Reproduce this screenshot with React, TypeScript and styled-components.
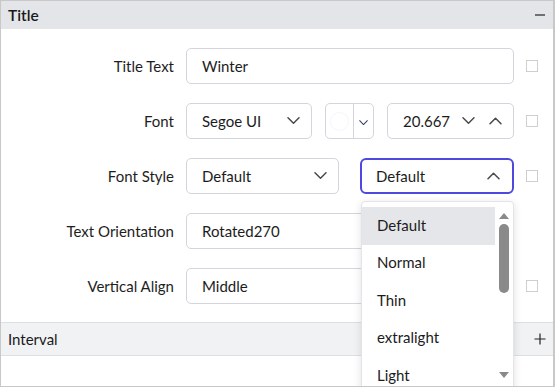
import React from "react";
import styled, { createGlobalStyle } from "styled-components";

const GlobalStyle = createGlobalStyle`
  html, body { margin: 0; padding: 0; background: #ffffff; }
  body { font-family: Lato, "Open Sans", sans-serif; color: #1c1c1c; }
  * { box-sizing: border-box; }
  svg { display: block; }
`;

const Panel = styled.div`
  position: relative;
  width: 555px;
  height: 387px;
  border: 1px solid #c8c8c8;
  border-right-width: 2px;
  overflow: hidden;
  background: #ffffff;
  display: flex;
  flex-direction: column;
`;

const SectionHeader = styled.div<{ $collapsed?: boolean }>`
  display: flex;
  align-items: center;
  justify-content: space-between;
  height: ${(p) => (p.$collapsed ? "34px" : "28px")};
  padding: 0 7px 0 7px;
  background: ${(p) => (p.$collapsed ? "#f1f2f4" : "#e4e5e8")};
  border-top: ${(p) => (p.$collapsed ? "1px solid #dedfe2" : "none")};
  border-bottom: ${(p) => (p.$collapsed ? "1px solid #dedfe2" : "none")};
  font-size: ${(p) => (p.$collapsed ? "15px" : "15.5px")};
  font-weight: ${(p) => (p.$collapsed ? 400 : 600)};
  color: #1a1a1a;
  flex-shrink: 0;
`;

const Body = styled.div`
  display: flex;
  flex-direction: column;
  gap: 19px;
  padding: 19px 0 18px 1px;
`;

const Row = styled.div`
  display: grid;
  grid-template-columns: 172px 328px 11px;
  column-gap: 12px;
  align-items: center;
  height: 36px;
`;

const Label = styled.div`
  text-align: right;
  font-size: 15px;
  color: #1e1e1e;
`;

const Box = styled.div<{ $focused?: boolean; $width?: number }>`
  display: flex;
  align-items: center;
  height: 36px;
  width: ${(p) => (p.$width ? `${p.$width}px` : "100%")};
  border: ${(p) => (p.$focused ? "2px solid #5046e0" : "1px solid #d4d4dc")};
  border-radius: ${(p) => (p.$focused ? "6px" : "5px")};
  padding: 0 ${(p) => (p.$focused ? "12px" : "11px")} 0 ${(p) => (p.$focused ? "14px" : "15px")};
  font-size: 15px;
  color: #1c1c1c;
  background: #ffffff;
`;

const BoxText = styled.span`
  flex: 1;
  white-space: nowrap;
`;

const Split = styled.div<{ $gap: number }>`
  display: flex;
  gap: ${(p) => p.$gap}px;
`;

const ColorBox = styled.div`
  display: flex;
  width: 49px;
  height: 36px;
  border: 1px solid #d4d4dc;
  border-radius: 5px;
  overflow: hidden;
`;

const Swatch = styled.div`
  flex: 1;
  display: flex;
  align-items: center;
  justify-content: center;
  border-right: 1px solid #d4d4dc;
`;

const SwatchDot = styled.div`
  width: 19px;
  height: 19px;
  border-radius: 50%;
  border: 1px solid #f6f6f6;
  background: #ffffff;
`;

const ColorArrow = styled.div`
  width: 19px;
  display: flex;
  align-items: center;
  justify-content: center;
  padding-top: 3px;
`;

const Check = styled.div`
  width: 12px;
  height: 12px;
  border: 1px solid #cfcfcf;
  background: #ffffff;
`;

const Spinners = styled.div`
  display: flex;
  gap: 14px;
  align-items: center;
`;

const Popup = styled.div`
  position: absolute;
  left: 360px;
  top: 200px;
  width: 153px;
  height: 200px;
  background: #ffffff;
  border: 1px solid #e4e4e8;
  border-radius: 4px;
  box-shadow: 0 2px 8px rgba(0, 0, 0, 0.12);
  display: flex;
  padding-top: 5px;
`;

const Options = styled.div`
  flex: 1;
  display: flex;
  flex-direction: column;
`;

const Option = styled.div<{ $active?: boolean }>`
  height: 37.5px;
  flex-shrink: 0;
  display: flex;
  align-items: center;
  padding-left: 15px;
  padding-bottom: 2px;
  font-size: 15px;
  color: #1c1c1c;
  background: ${(p) => (p.$active ? "#e5e6e9" : "transparent")};
`;

const ScrollTrack = styled.div`
  width: 18px;
  display: flex;
  flex-direction: column;
  align-items: center;
  padding-top: 6px;
`;

const ScrollThumb = styled.div`
  width: 10px;
  height: 69px;
  margin-top: 5px;
  border-radius: 5px;
  background: #8a8a8a;
`;

const ScrollDown = styled.div`
  margin-top: 79px;
`;

const Chevron = ({ up = false, w = 13, color = "#4a4a4a" }: { up?: boolean; w?: number; color?: string }) => (
  <svg width={w} height={w / 2 + 1} viewBox="0 0 13 7.5" fill="none">
    <path
      d={up ? "M1 6.8 L6.5 1.2 L12 6.8" : "M1 0.8 L6.5 6.3 L12 0.8"}
      stroke={color}
      strokeWidth={1.5}
      strokeLinecap="round"
      strokeLinejoin="round"
    />
  </svg>
);

const Triangle = ({ up = false }: { up?: boolean }) => (
  <svg width="10" height="6" viewBox="0 0 10 6">
    <path d={up ? "M5 0 L10 6 L0 6 Z" : "M0 0 L10 0 L5 6 Z"} fill="#8a8a8a" />
  </svg>
);

const Minus = () => (
  <svg width="12" height="12" viewBox="0 0 12 12">
    <path d="M1 6 H11" stroke="#222" strokeWidth="1.2" />
  </svg>
);

const Plus = () => (
  <svg width="12" height="12" viewBox="0 0 12 12">
    <path d="M0.5 6 H11.5 M6 0.5 V11.5" stroke="#222" strokeWidth="1.2" />
  </svg>
);

const fontWeights = ["Default", "Normal", "Thin", "extralight", "Light"];

export default function App() {
  return (
    <>
      <GlobalStyle />
      <Panel>
        <SectionHeader>
          <span>Title</span>
          <Minus />
        </SectionHeader>
        <Body>
          <Row>
            <Label>Title Text</Label>
            <Box>
              <BoxText>Winter</BoxText>
            </Box>
            <Check />
          </Row>
          <Row>
            <Label>Font</Label>
            <Split $gap={13}>
              <Box $width={126}>
                <BoxText>Segoe UI</BoxText>
                <Chevron />
              </Box>
              <ColorBox>
                <Swatch>
                  <SwatchDot />
                </Swatch>
                <ColorArrow>
                  <Chevron w={9} color="#2f3f66" />
                </ColorArrow>
              </ColorBox>
              <Box $width={127}>
                <BoxText>20.667</BoxText>
                <Spinners>
                  <Chevron />
                  <Chevron up />
                </Spinners>
              </Box>
            </Split>
            <Check />
          </Row>
          <Row>
            <Label>Font Style</Label>
            <Split $gap={21}>
              <Box $width={153}>
                <BoxText>Default</BoxText>
                <Chevron />
              </Box>
              <Box $width={154} $focused>
                <BoxText>Default</BoxText>
                <Chevron up />
              </Box>
            </Split>
            <Check />
          </Row>
          <Row>
            <Label>Text Orientation</Label>
            <Box>
              <BoxText>Rotated270</BoxText>
              <Chevron />
            </Box>
            <span />
          </Row>
          <Row>
            <Label>Vertical Align</Label>
            <Box>
              <BoxText>Middle</BoxText>
              <Chevron />
            </Box>
            <Check />
          </Row>
        </Body>
        <SectionHeader $collapsed>
          <span>Interval</span>
          <Plus />
        </SectionHeader>
        <Popup>
          <Options>
            {fontWeights.map((w, i) => (
              <Option key={w} $active={i === 0}>
                {w}
              </Option>
            ))}
          </Options>
          <ScrollTrack>
            <Triangle up />
            <ScrollThumb />
            <ScrollDown>
              <Triangle />
            </ScrollDown>
          </ScrollTrack>
        </Popup>
      </Panel>
    </>
  );
}
